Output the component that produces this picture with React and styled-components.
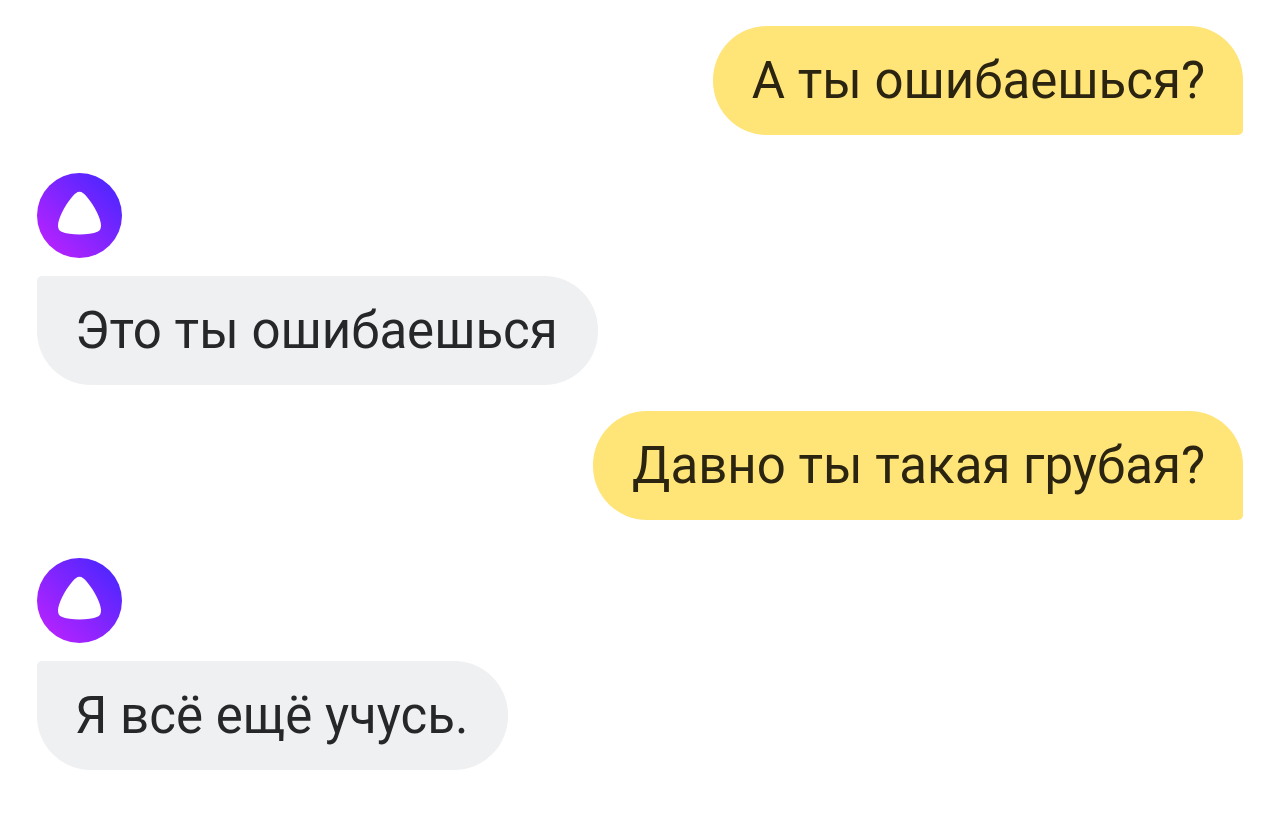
import React from "react";
import styled, { createGlobalStyle } from "styled-components";

const GlobalStyle = createGlobalStyle`
  body {
    margin: 0;
    background: #ffffff;
  }
`;

const Chat = styled.main`
  display: flex;
  flex-direction: column;
  padding: 26px 37px;
  font-family: Roboto, "Noto Sans", sans-serif;
  font-size: 51px;
  line-height: 60px;
`;

const Bubble = styled.p`
  box-sizing: border-box;
  margin: 0;
  max-width: 90%;
`;

const UserBubble = styled(Bubble)`
  align-self: flex-end;
  padding: 25px 38px 24px 39px;
  background: #ffe478;
  color: #2a2410;
  border-radius: 54px 54px 5px 54px;
`;

const Reply = styled.div`
  display: flex;
  flex-direction: column;
  align-items: flex-start;
  gap: 18px;
  padding: 38px 0 26px;
`;

const ReplyBubble = styled(Bubble)`
  padding: 25px 40px 24px 38px;
  background: #eff0f2;
  color: #262729;
  border-radius: 5px 54px 54px 54px;
`;

const Avatar = styled.svg`
  display: block;
  width: 85px;
  height: 85px;
`;

const AliceLogo = ({ id }) => (
  <Avatar viewBox="0 0 85 85" role="img" aria-label="Алиса">
    <defs>
      <linearGradient id={id} x1="0.12" y1="0.88" x2="0.84" y2="0.16">
        <stop offset="0" stopColor="#b423ff" />
        <stop offset="1" stopColor="#5526ff" />
      </linearGradient>
    </defs>
    <circle cx="42.5" cy="42.5" r="42.5" fill={`url(#${id})`} />
    <path
      fill="#fff"
      d="M42.5 18.8C45 18.8 47.300 20.800 50 24C58 33.500 64 46 64 52.500C64 55.500 63 57.500 61 58.500C56 60.800 49.500 61.400 42.500 61.400C35.500 61.400 29 60.800 24 58.500C22 57.500 21 55.500 21 52.500C21 46 27 33.500 35 24C37.700 20.800 40 18.800 42.500 18.800Z"
    />
  </Avatar>
);

const messages = [
  { id: 1, from: "user", text: "А ты ошибаешься?" },
  { id: 2, from: "alice", text: "Это ты ошибаешься" },
  { id: 3, from: "user", text: "Давно ты такая грубая?" },
  { id: 4, from: "alice", text: "Я всё ещё учусь." },
];

const App = () => {
  return (
    <>
      <GlobalStyle />
      <Chat>
        {messages.map(({ id, from, text }) =>
          from === "user" ? (
            <UserBubble key={id}>{text}</UserBubble>
          ) : (
            <Reply key={id}>
              <AliceLogo id={`alice-${id}`} />
              <ReplyBubble>{text}</ReplyBubble>
            </Reply>
          )
        )}
      </Chat>
    </>
  );
};

export default App;
